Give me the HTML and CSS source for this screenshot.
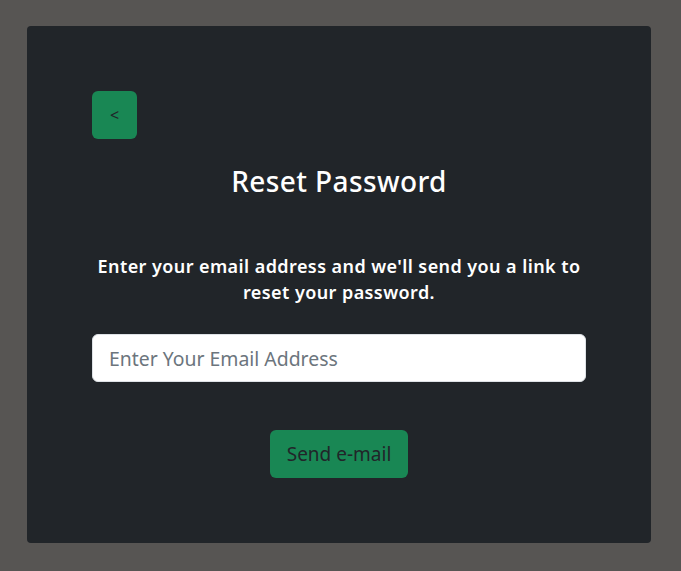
FILE: index.html
```html
<!DOCTYPE html>
<html lang="en">
<head>
<meta charset="utf-8">
<title>Reset Password</title>
<link rel="stylesheet" href="styles.css">
</head>
<body>
<main class="card">
  <div class="back-row"><button class="btn btn-back" type="button">&lt;</button></div>
  <h3 class="title">Reset Password</h3>
  <p class="lead">Enter your email address and we'll send you a link to reset your password.</p>
  <input class="input" type="email" placeholder="Enter Your Email Address">
  <div class="actions"><button class="btn btn-send" type="button">Send e-mail</button></div>
</main>
</body>
</html>
```
FILE: styles.css
```css
* { box-sizing: border-box; }
html, body { height: 100%; }
body {
  margin: 0;
  background: #575553;
  font-family: "Noto Sans", "Open Sans", sans-serif;
  padding: 26px 30px 28px 27px;
}
.card {
  background: #212529;
  border-radius: 4px;
  width: 624px;
  height: 517px;
  padding: 65px 65px 0 65px;
  display: flex;
  flex-direction: column;
  color: #fff;
}
.back-row { display: flex; }
.btn {
  border: none;
  background: #198754;
  color: #212529;
  border-radius: 6px;
  font-family: inherit;
  cursor: pointer;
}
.btn-back {
  width: 45px;
  height: 48px;
  font-size: 16px;
  padding: 0;
}
.title {
  margin: 24px 0 0;
  text-align: center;
  font-size: 28px;
  letter-spacing: 0.4px;
  font-weight: 500;
  line-height: 36px;
}
.lead {
  margin: 54px 0 0;
  text-align: center;
  font-size: 18px;
  font-weight: 600;
  letter-spacing: 0.42px;
  line-height: 26px;
}
.input {
  margin-top: 29px;
  width: 494px;
  height: 48px;
  border: 1px solid #dee2e6;
  border-radius: 6px;
  padding: 0 16px;
  font-family: inherit;
  font-size: 19.4px;
  color: #212529;
  background: #fff;
}
.input::placeholder { color: #6c757d; }
.actions {
  display: flex;
  justify-content: center;
  margin-top: 48px;
}
.btn-send {
  height: 48px;
  padding: 0 17px;
  font-size: 19px;
}
```
